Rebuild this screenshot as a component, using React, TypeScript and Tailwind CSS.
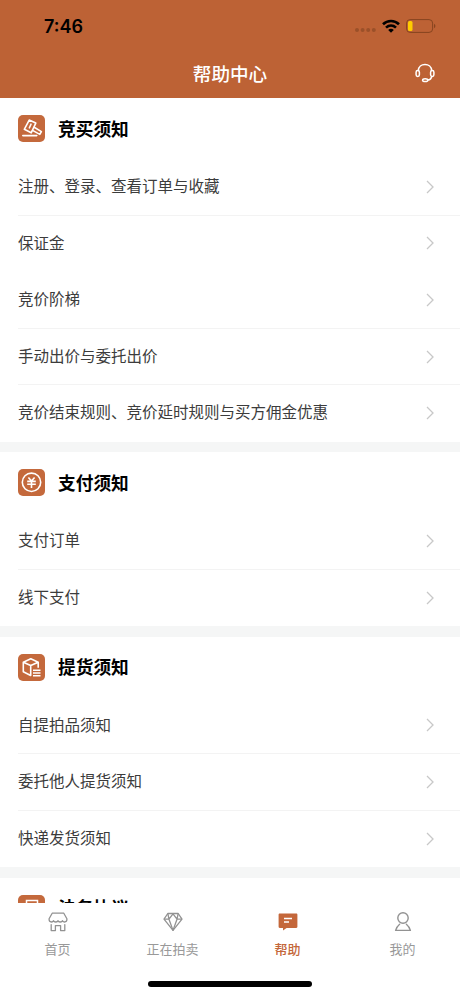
import React from "react";

type IconProps = { className?: string };

interface HelpSection {
  title: string;
  icon: React.FC;
  items: string[];
  // rows that have no hairline below them
  plain?: number[];
}

const GavelIcon: React.FC = () => (
  <svg viewBox="0 0 27 27" className="size-[27px]" fill="none" stroke="#fff" strokeWidth="1.6" strokeLinejoin="round" strokeLinecap="round">
    <path d="M11.2 5.1l6.6 3-4.6 9.7-6.9-3.5z" />
    <path d="M13 9.2l-1.6 3.6" />
    <path d="M16.2 12.2l7.2 4.4-1.6 2.8-7.3-4" />
    <path d="M4.8 20.6h14" />
  </svg>
);

const YuanIcon: React.FC = () => (
  <svg viewBox="0 0 27 27" className="size-[27px]" fill="none" stroke="#fff" strokeWidth="1.6">
    <circle cx="13.5" cy="13.3" r="9.2" />
    <path d="M10.4 8.5l3.1 3.5 3.1-3.5M9.2 12.4h8.6M9.2 15.2h8.6M13.5 12v7" />
  </svg>
);

const BoxIcon: React.FC = () => (
  <svg viewBox="0 0 27 27" className="size-[27px]" fill="none" stroke="#fff" strokeWidth="1.6" strokeLinejoin="round">
    <path d="M20.2 13.8V8.2L12.8 4.8 5.3 8.2v9.6l7.4 3.7V11.6L5.3 8.2M12.7 11.6l7.5-3.4" />
    <path d="M15 16.2h7.5M15 19h7.5M15 21.8h7.5" />
  </svg>
);

const DocIcon: React.FC = () => (
  <svg viewBox="0 0 27 27" className="size-[27px]" fill="none" stroke="#fff" strokeWidth="1.5">
    <path d="M8.5 20V5.6h11V20zM11.5 8.8h5" />
  </svg>
);

const Chevron: React.FC = () => (
  <svg viewBox="0 0 8 14" className="mr-[26px] h-[14px] w-2" fill="none" stroke="#c8c8c8" strokeWidth="1.3">
    <path d="M1 1l6 6-6 6" />
  </svg>
);

const HeadsetIcon: React.FC<IconProps> = ({ className }) => (
  <svg viewBox="0 0 20 20" className={className} fill="none" stroke="#fff" strokeWidth="1.5" strokeLinecap="round">
    <path d="M3.3 7.4C3.6 3.9 6.4 1.4 10 1.4s6.4 2.5 6.7 6" />
    <rect x="1.1" y="7.5" width="3.3" height="6" rx="1.65" />
    <rect x="15.6" y="7.5" width="3.3" height="6" rx="1.65" />
    <path d="M16.6 13.8c-.4 1.9-1.7 3-3.7 3.3" />
    <ellipse cx="10.2" cy="17.2" rx="2.6" ry="1.4" />
  </svg>
);

const ShopIcon: React.FC = () => (
  <svg viewBox="0 0 20 20" className="size-5" fill="none" stroke="#929292" strokeWidth="1.3" strokeLinejoin="round" strokeLinecap="round">
    <path d="M4.2 1.2h11.6l3.1 5.6v.8c0 1.5-.9 2.4-2.2 2.4s-2.2-.9-2.2-1.4c0 .5-.9 1.4-2.25 1.4S10 9.1 10 8.6c0 .5-.9 1.4-2.25 1.4S5.5 9.1 5.5 8.6c0 .5-.9 1.4-2.2 1.4S1.1 9.1 1.1 7.6v-.8z" />
    <path d="M3.2 12.6v6h4.2v-5h5.2v5h4.2v-6" />
  </svg>
);

const DiamondIcon: React.FC = () => (
  <svg viewBox="0 0 20 20" className="size-5" fill="none" stroke="#929292" strokeWidth="1.3" strokeLinejoin="round">
    <path d="M4.8 1.5h10.4L19 7.2l-9 11.2L1 7.2z" />
    <path d="M1 7.2h5l4-5.4 4 5.4h5M4.8 1.5L6 7.2l4 11.2 4-11.2 1.2-5.7" />
  </svg>
);

const MessageIcon: React.FC = () => (
  <svg viewBox="0 0 20 20" className="size-5">
    <path
      fill="#c4673a"
      d="M1.7 1.4h16.6c.6 0 1.1.5 1.1 1.1v12.3c0 .6-.5 1.1-1.1 1.1H8.6L5 18.6v-2.7H1.7c-.6 0-1.1-.5-1.1-1.1V2.5c0-.6.5-1.1 1.1-1.1z"
    />
    <path stroke="#fff" strokeWidth="1.4" d="M6 6.5h8M6 10h5" />
  </svg>
);

const PersonIcon: React.FC = () => (
  <svg viewBox="0 0 20 20" className="size-5" fill="none" stroke="#929292" strokeWidth="1.4" strokeLinejoin="round" strokeLinecap="round">
    <circle cx="10" cy="6" r="5.2" />
    <path d="M6.6 12.2c-1.5 1.2-3 3.2-4 6.2h14.8c-1-3-2.5-5-4-6.2" />
  </svg>
);

const sections: HelpSection[] = [
  {
    title: "竞买须知",
    icon: GavelIcon,
    items: ["注册、登录、查看订单与收藏", "保证金", "竞价阶梯", "手动出价与委托出价", "竞价结束规则、竞价延时规则与买方佣金优惠"],
    plain: [1],
  },
  { title: "支付须知", icon: YuanIcon, items: ["支付订单", "线下支付"] },
  { title: "提货须知", icon: BoxIcon, items: ["自提拍品须知", "委托他人提货须知", "快递发货须知"] },
  { title: "法务协议", icon: DocIcon, items: [] },
];

const tabs = [
  { label: "首页", icon: ShopIcon },
  { label: "正在拍卖", icon: DiamondIcon },
  { label: "帮助", icon: MessageIcon, active: true },
  { label: "我的", icon: PersonIcon },
];

const StatusBar: React.FC = () => (
  <div className="flex h-[50px] items-center justify-between pr-6 pl-11">
    <span className="pt-[3px] font-['Inter','Liberation_Sans',sans-serif] text-[18px] leading-none font-semibold text-black">7:46</span>
    <div className="flex items-center pt-px">
      <svg viewBox="0 0 22 6" className="mt-2 mr-[5px] h-1.5 w-[22px]" fill="#9b5029">
        <circle cx="2" cy="3" r="2" />
        <circle cx="7.6" cy="3" r="2" />
        <circle cx="13.2" cy="3" r="2" />
        <circle cx="18.8" cy="3" r="2" />
      </svg>
      <svg viewBox="0 0 18 14" className="mr-1.5 h-3.5 w-[18px]" fill="none" stroke="#000" strokeWidth="2.6">
        <path d="M1 5.2C5.5.9 12.5.9 17 5.2M4 8.6c3-2.8 7-2.8 10 0" />
        <path d="M9 13.8l-2.8-2.9c1.6-1.4 4-1.4 5.6 0z" fill="#000" stroke="none" />
      </svg>
      <svg viewBox="0 0 30 14" className="h-3.5 w-[30px]">
        <rect x=".6" y=".6" width="26" height="12.8" rx="3.5" fill="none" stroke="#86441f" strokeWidth="1" />
        <rect x="2" y="2" width="4.5" height="10" rx="1.5" fill="#fc0" />
        <path d="M28 4.8c1.9.8 1.9 3.6 0 4.4z" fill="#86441f" />
      </svg>
    </div>
  </div>
);

const Section: React.FC<{ section: HelpSection }> = ({ section }) => {
  const Icon = section.icon;
  return (
    <section className="shrink-0 bg-white">
      <div className="flex h-[61px] items-center gap-[13px] pl-[18px]">
        <div className="size-[27px] shrink-0 rounded-[5px] bg-[#c4693c]">
          <Icon />
        </div>
        <h2 className="text-[17.7px] leading-none font-bold text-black">{section.title}</h2>
      </div>
      {section.items.map((item, i) => (
        <div
          key={item}
          className={`ml-[18px] flex h-[56.6px] items-center justify-between border-b ${
            i === section.items.length - 1 || section.plain?.includes(i) ? "border-transparent" : "border-[#f3f3f3]"
          }`}
        >
          <span className="pb-0.5 text-[15.5px] leading-none text-[#3c3c3c]">{item}</span>
          <Chevron />
        </div>
      ))}
    </section>
  );
};

export default function App() {
  return (
    <div className="flex h-[996px] w-[460px] flex-col overflow-hidden bg-white font-['Noto_Sans_CJK_SC',sans-serif]">
      <header className="h-[98px] shrink-0 bg-[#bd6235]">
        <StatusBar />
        <div className="grid h-[46px] grid-cols-[1fr_auto_1fr] items-center">
          <span />
          <h1 className="text-[18.6px] leading-none font-medium text-white">帮助中心</h1>
          <HeadsetIcon className="mr-[25px] size-5 justify-self-end" />
        </div>
      </header>

      <main className="flex min-h-0 flex-1 flex-col gap-[10.2px] overflow-hidden bg-[#f5f6f6]">
        {sections.map((section) => (
          <Section key={section.title} section={section} />
        ))}
      </main>

      <nav className="flex h-[93px] shrink-0 flex-col items-center bg-white">
        <div className="grid w-full grid-cols-4">
          {tabs.map(({ label, icon: Icon, active }) => (
            <div key={label} className="flex flex-col items-center gap-2.5 pt-[8.5px]">
              <Icon />
              <span className={`text-[13px] leading-none ${active ? "font-medium text-[#c4673a]" : "text-[#999]"}`}>{label}</span>
            </div>
          ))}
        </div>
        <div className="mt-auto mb-[9px] h-1.5 w-[164px] rounded-full bg-black" />
      </nav>
    </div>
  );
}
